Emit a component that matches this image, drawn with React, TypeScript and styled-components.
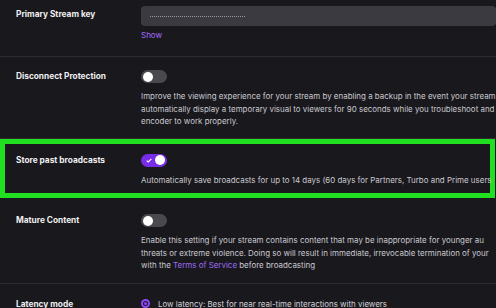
import React from 'react';
import styled, {createGlobalStyle} from "styled-components";

const Global = createGlobalStyle`
  html, body {
    margin: 0;
    padding: 0;
    background: #19181d;
    overflow: hidden;
  }
  body {
    font-family: Inter, "Noto Sans", sans-serif;
  }
`

const Page = styled.div`
  width: 496px;
  height: 308px;
  overflow: hidden;
  background: #19181d;
`

const Row = styled.div<{ $pt: number; $pb: number; $highlight?: boolean }>`
  display: flex;
  padding: ${p => p.$pt}px 0 ${p => p.$pb}px 0;
  border-bottom: 1px solid #2d2c32;
  ${p => p.$highlight && `
    border-bottom: none;
    margin-right: 1px;
    box-shadow: inset 0 0 0 5px #21e021;
  `}
`

const Label = styled.div`
  width: 125px;
  flex-shrink: 0;
  padding-left: 16px;
  font-size: 8.3px;
  line-height: 13px;
  font-weight: 700;
  color: #efeff1;
  white-space: nowrap;
`

const Control = styled.div`
  flex: 1;
  min-width: 0;
  display: flex;
  flex-direction: column;
  align-items: flex-start;
`

const KeyInput = styled.div`
  width: 100%;
  height: 20px;
  margin-top: -2px;
  background: #3b3a40;
  border-radius: 4px;
  display: flex;
  align-items: center;
  padding-left: 9px;
  box-sizing: border-box;
`

const Mask = styled.span`
  width: 95px;
  border-top: 1px dotted #9a99a0;
`

const Show = styled.span`
  margin-top: 3px;
  font-size: 8px;
  line-height: 12px;
  color: #a36bff;
`

const Track = styled.div<{ $on?: boolean }>`
  width: 26px;
  height: 13px;
  border-radius: 7px;
  background: ${p => p.$on ? '#772ce8' : '#4a4950'};
  display: flex;
  align-items: center;
  justify-content: ${p => p.$on ? 'space-between' : 'flex-start'};
  padding: 0 2px 0 ${p => p.$on ? '5px' : '2px'};
  box-sizing: border-box;
`

const Knob = styled.div`
  width: 10px;
  height: 10px;
  border-radius: 50%;
  background: #ffffff;
`

const Desc = styled.div`
  margin-top: 7px;
  font-size: 7.95px;
  line-height: 12.5px;
  color: #cac9cf;
  width: 100%;
  overflow: hidden;
`

const Line = styled.div`
  white-space: nowrap;
`

const Link = styled.span`
  color: #9c6cf2;
`

const Radio = styled.div`
  display: flex;
  align-items: center;
  gap: 8px;
  font-size: 7.95px;
  line-height: 12px;
  color: #d3d2d8;
  white-space: nowrap;
`

const RadioDot = styled.div`
  width: 9px;
  height: 9px;
  border-radius: 50%;
  border: 2px solid #9147ff;
  box-sizing: border-box;
  display: flex;
  align-items: center;
  justify-content: center;
  &::after {
    content: '';
    width: 3px;
    height: 3px;
    border-radius: 50%;
    background: #9147ff;
  }
`

const Toggle = ({on}: { on?: boolean }) => (
    <Track $on={on}>
        {on && (
            <svg width="6" height="5" viewBox="0 0 6 5">
                <polyline points="0.6,2.6 2.2,4 5.4,0.8" fill="none" stroke="#fff" strokeWidth="1.1"/>
            </svg>
        )}
        <Knob/>
    </Track>
)

const App = () => {
    return (
        <Page>
            <Global/>
            <Row $pt={8} $pb={15}>
                <Label>Primary Stream key</Label>
                <Control>
                    <KeyInput><Mask/></KeyInput>
                    <Show>Show</Show>
                </Control>
            </Row>
            <Row $pt={13} $pb={10}>
                <Label>Disconnect Protection</Label>
                <Control>
                    <Toggle/>
                    <Desc>
                        <Line>Improve the viewing experience for your stream by enabling a backup in the event your stream</Line>
                        <Line>automatically display a temporary visual to viewers for 90 seconds while you troubleshoot and</Line>
                        <Line>encoder to work properly.</Line>
                    </Desc>
                </Control>
            </Row>
            <Row $pt={15} $pb={12} $highlight>
                <Label>Store past broadcasts</Label>
                <Control>
                    <Toggle on/>
                    <Desc>
                        <Line>Automatically save broadcasts for up to 14 days (60 days for Partners, Turbo and Prime users</Line>
                    </Desc>
                </Control>
            </Row>
            <Row $pt={16} $pb={11}>
                <Label>Mature Content</Label>
                <Control>
                    <Toggle/>
                    <Desc>
                        <Line>Enable this setting if your stream contains content that may be inappropriate for younger au</Line>
                        <Line>threats or extreme violence. Doing so will result in immediate, irrevocable termination of your</Line>
                        <Line>with the <Link>Terms of Service</Link> before broadcasting</Line>
                    </Desc>
                </Control>
            </Row>
            <Row $pt={14} $pb={10}>
                <Label>Latency mode</Label>
                <Control>
                    <Radio><RadioDot/>Low latency: Best for near real-time interactions with viewers</Radio>
                </Control>
            </Row>
        </Page>
    );
};

export default App;
